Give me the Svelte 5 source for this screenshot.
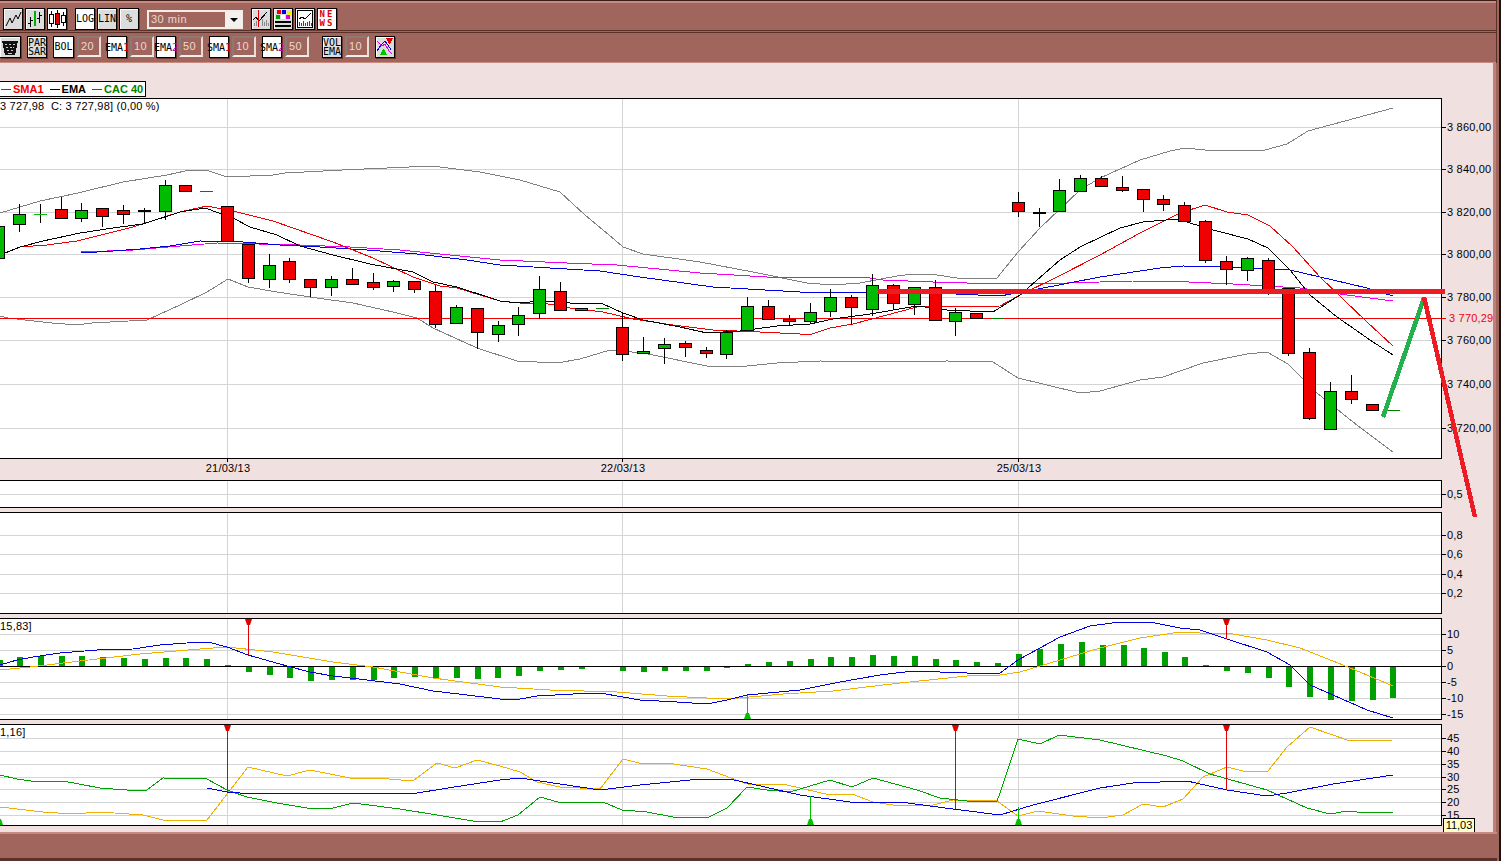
<script>
  // candles: x, wick top, body top, body bottom, wick bottom, colour (r g = body, d l k = flat dash)
  const candles = [
    [-2,226,226,258,258,'g'],[19,204,214,224,231,'g'],[40,204,214,214,222,'l'],[61,197,209,218,218,'r'],
    [81,203,210,218,221,'g'],[102,208,208,216,226,'r'],[123,205,210,214,223,'r'],[144,208,210,210,223,'k'],
    [165,180,185,211,219,'g'],[185,185,185,191,191,'r'],[206,191,191,191,191,'d'],[227,206,206,241,241,'r'],
    [248,244,244,278,282,'r'],[269,254,265,279,287,'g'],[289,258,261,279,282,'r'],[310,279,279,287,296,'r'],
    [331,276,279,287,295,'g'],[352,268,279,284,284,'r'],[373,273,282,287,289,'r'],[393,280,281,286,291,'g'],
    [414,281,281,289,292,'r'],[435,285,291,324,327,'r'],[456,305,307,323,323,'g'],[477,308,308,332,348,'r'],
    [498,321,325,334,341,'g'],[518,307,315,324,335,'g'],[539,276,289,313,318,'g'],[560,282,291,310,310,'r'],
    [581,308,308,310,310,'g'],[602,308,308,308,308,'d'],[622,313,327,354,360,'r'],[643,337,351,353,353,'g'],
    [664,338,344,348,363,'g'],[685,341,343,347,356,'r'],[706,347,350,353,357,'r'],[726,330,332,354,358,'g'],
    [747,297,306,330,330,'g'],[768,300,306,319,319,'r'],[789,315,319,321,325,'r'],[810,303,312,321,323,'g'],
    [830,289,297,311,316,'g'],[851,295,297,307,324,'r'],[872,274,285,309,315,'g'],[893,284,285,303,309,'r'],
    [914,287,287,304,314,'g'],[935,280,287,320,320,'r'],[955,308,312,321,335,'g'],[976,313,313,318,318,'r'],
    [997,318,318,318,318,'d'],[1018,192,202,211,216,'r'],[1039,208,212,212,226,'k'],[1059,179,190,211,211,'g'],
    [1080,175,178,191,191,'g'],[1101,176,178,186,186,'r'],[1122,176,187,190,191,'r'],[1143,189,189,199,211,'r'],
    [1163,195,199,204,210,'r'],[1184,202,205,221,221,'r'],[1205,220,221,260,262,'r'],[1226,256,261,269,284,'r'],
    [1247,257,258,270,280,'g'],[1268,258,260,291,294,'r'],[1288,288,288,353,355,'r'],[1309,348,352,418,419,'r'],
    [1330,382,391,429,429,'g'],[1351,375,391,399,403,'r'],[1372,404,404,410,410,'r'],[1393,410,410,410,410,'d']
  ];

  const dashColors = { d: '#008000', l: '#00c000', k: '#000' };

  const bollUp = [[0,213],[40,201],[78,193],[123,182],[167,175],[185,171],[206,170],[227,177],[273,175],[285,173],[342,170],[432,166],[480,172],[520,180],[560,192],[585,215],[615,240],[623,247],[643,254],[700,262],[753,272],[807,283],[833,285],[860,283],[897,276],[913,274],[937,275],[957,278],[997,278],[1018,252],[1040,228],[1080,190],[1100,178],[1140,160],[1170,151],[1185,148],[1205,150],[1265,150],[1287,144],[1308,131],[1393,108]];
  const bollDown = [[0,316],[8,318],[25,320],[52,323],[77,325],[92,323],[147,320],[180,305],[207,292],[228,279],[248,287],[277,292],[317,298],[353,303],[393,312],[417,318],[433,328],[477,348],[517,361],[557,363],[580,359],[610,350],[643,353],[707,366],[737,367],[777,363],[820,361],[867,362],[947,361],[993,362],[1018,378],[1080,393],[1100,391],[1140,380],[1163,377],[1203,363],[1247,354],[1267,352],[1288,364],[1317,393],[1353,422],[1393,452]];
  const sma = [[5,253],[20,247],[47,245],[77,241],[133,227],[180,212],[207,206],[233,211],[273,221],[333,242],[373,258],[413,277],[440,286],[457,288],[500,301],[520,303],[543,303],[570,308],[603,312],[633,319],[673,325],[713,330],[760,332],[800,334],[812,334],[830,328],[853,324],[917,307],[1000,306],[1020,295],[1057,277],[1100,255],[1140,233],[1180,213],[1205,205],[1227,212],[1248,215],[1270,226],[1293,247],[1320,277],[1367,322],[1393,346]];
  const ema = [[5,253],[20,247],[43,241],[80,233],[113,228],[143,224],[180,212],[205,208],[233,218],[250,227],[277,235],[300,246],[333,255],[370,264],[413,272],[433,282],[457,287],[500,301],[518,303],[543,301],[570,303],[603,304],[623,313],[643,320],[680,327],[707,333],[740,331],[777,326],[810,324],[833,319],[870,314],[917,306],[947,310],[993,312],[1020,295],[1060,260],[1080,247],[1120,228],[1143,222],[1177,219],[1213,230],[1248,239],[1268,248],[1290,270],[1310,295],[1337,317],[1370,340],[1393,355]];
  const ema2 = [[81,253],[113,251],[140,249],[170,246],[200,241],[243,242],[280,245],[320,247],[367,250],[417,254],[467,260],[500,265],[550,268],[600,271],[640,277],[713,287],[800,292],[867,292],[933,293],[1000,296],[1033,290],[1100,277],[1160,268],[1183,266],[1233,267],[1290,270],[1333,280],[1367,288],[1393,296]];
  const ema50 = [[81,252],[133,250],[180,246],[217,243],[300,245],[350,247],[400,250],[500,260],[567,263],[617,265],[700,273],[767,277],[863,277],[883,280],[933,282],[1000,284],[1067,283],[1133,281],[1167,281],[1233,284],[1300,288],[1347,295],[1393,301]];

  const bars = [[20,657],[41,656],[62,656],[82,656],[103,657],[124,658],[145,659],[166,658],[186,658],[207,659],[228,665],[249,672],[270,675],[290,678],[311,681],[332,680],[353,680],[374,680],[394,678],[415,677],[436,679],[457,678],[478,679],[498,678],[519,676],[540,671],[561,670],[582,669],[623,671],[644,672],[665,671],[686,671],[707,671],[727,668],[748,664],[769,662],[790,661],[811,659],[831,657],[852,657],[873,655],[894,656],[915,656],[936,659],[956,660],[977,662],[998,663],[1019,654],[1040,649],[1061,644],[1082,642],[1103,645],[1124,645],[1144,648],[1165,652],[1185,657],[1206,665],[1227,671],[1248,673],[1269,678],[1289,687],[1310,697],[1331,700],[1352,701],[1373,700],[1393,698],[0,660]];
  const macd = [[0,665],[17,660],[33,657],[60,653],[97,650],[133,649],[160,645],[200,642],[208,642],[227,647],[248,655],[287,666],[310,672],[333,676],[367,680],[400,684],[433,691],[467,695],[500,699],[520,699],[537,696],[573,694],[600,693],[640,700],[677,702],[707,704],[727,700],[747,695],[800,690],[840,682],[880,675],[913,671],[967,673],[1000,673],[1018,660],[1040,648],[1060,637],[1090,626],[1120,622],[1150,622],[1180,628],[1200,630],[1227,639],[1267,652],[1290,665],[1310,685],[1333,695],[1367,710],[1393,718]];
  const signal = [[0,670],[30,667],[80,661],[140,654],[200,649],[227,647],[273,652],[333,662],[373,667],[433,678],[500,687],[550,690],[617,692],[667,696],[727,699],[783,694],[833,691],[900,683],[967,676],[1000,675],[1020,672],[1060,660],[1100,648],[1140,638],[1180,632],[1200,633],[1233,634],[1267,640],[1300,648],[1343,665],[1393,686]];

  const adxGreen = [[0,775],[17,779],[38,782],[63,781],[100,788],[140,791],[147,790],[163,778],[207,779],[227,790],[247,797],[277,803],[307,808],[333,808],[353,803],[400,809],[437,815],[473,821],[500,822],[518,815],[540,797],[558,802],[603,802],[622,810],[647,812],[673,817],[707,818],[727,808],[747,787],[767,790],[790,792],[830,780],[852,787],[873,778],[917,790],[940,798],[967,801],[997,801],[1000,793],[1018,739],[1040,744],[1059,735],[1100,740],[1167,756],[1183,761],[1210,774],[1267,790],[1307,808],[1330,814],[1347,811],[1367,813],[1393,812]];
  const adxOrange = [[0,807],[43,812],[73,814],[100,812],[143,815],[163,820],[207,820],[248,767],[287,776],[310,770],[350,778],[377,778],[413,781],[437,763],[455,768],[477,760],[500,766],[520,772],[537,782],[560,787],[600,789],[623,759],[643,764],[667,763],[707,769],[747,784],[787,785],[830,795],[852,794],[873,802],[893,805],[933,805],[953,800],[997,801],[1018,816],[1038,811],[1073,816],[1100,818],[1123,815],[1143,804],[1163,807],[1183,799],[1203,777],[1227,767],[1247,772],[1268,771],[1287,747],[1310,727],[1350,741],[1393,740]];
  const adxBlue = [[207,788],[227,792],[240,793],[300,793],[343,793],[417,793],[467,785],[500,780],[520,778],[560,784],[600,790],[640,785],[700,779],[730,779],[800,795],[850,802],[900,802],[953,809],[1000,815],[1033,805],[1100,788],[1133,783],[1187,781],[1227,790],[1267,796],[1287,793],[1333,784],[1393,775]];

  const pts = (a) => a.map((p) => p.join(',')).join(' ');
  const verticals = [227, 622, 1018];
  const mainAxis = [[127,'3 860,00'],[169,'3 840,00'],[212,'3 820,00'],[254,'3 800,00'],[297,'3 780,00'],[340,'3 760,00'],[384,'3 740,00'],[428,'3 720,00']];
  const volAxis = [[535,'0,8'],[554,'0,6'],[574,'0,4'],[593,'0,2']];
  const macdAxis = [[634,'10'],[650,'5'],[682,'-5'],[698,'-10'],[714,'-15']];
  const adxAxis = [[738,'45'],[751,'40'],[764,'35'],[777,'30'],[789,'25'],[802,'20'],[815,'15']];
</script>

{#snippet grid(rows, top, bottom)}
  {#each rows as r}
    <line class="grid" x1="0" x2="1441" y1={r[0] + 0.5} y2={r[0] + 0.5} />
    <line class="tick" x1="1442" x2="1446" y1={r[0] + 0.5} y2={r[0] + 0.5} />
    <text class="axis" x="1447" y={r[0] + 4}>{r[1]}</text>
  {/each}
  {#each verticals as v}
    <line class="grid" x1={v + 0.5} x2={v + 0.5} y1={top} y2={bottom} />
  {/each}
{/snippet}

{#snippet frame(top, bottom)}
  <rect class="frame" x="-2" y={top + 0.5} width="1443.5" height={bottom - top} />
{/snippet}

{#snippet sigDown(x, top, to)}
  <line x1={x + 0.5} x2={x + 0.5} y1={top} y2={to} stroke="#e00000" shape-rendering="crispEdges" />
  <polygon points="{x - 3},{top} {x + 4},{top} {x + 3},{top + 3} {x + 2},{top + 6} {x - 1},{top + 6} {x - 2},{top + 3}" fill="#e00000" />
{/snippet}

{#snippet sigUp(x, bottom, to)}
  <line x1={x + 0.5} x2={x + 0.5} y1={bottom} y2={to} stroke="#00c000" shape-rendering="crispEdges" />
  <polygon points="{x - 3},{bottom} {x + 4},{bottom} {x + 3},{bottom - 3} {x + 2},{bottom - 6} {x - 1},{bottom - 6} {x - 2},{bottom - 3}" fill="#00c000" />
{/snippet}

<div class="app">
  <div class="bar first">
    <button class="tool">
      <svg viewBox="0 0 18 20"><polyline points="2,17 6,9 8,14 12,6 14,10 17,3" fill="none" stroke="#000" /></svg>
    </button>
    <button class="tool g2">
      <svg viewBox="0 0 18 20" shape-rendering="crispEdges">
        <path d="M4.5 8V18M2 14H4.5M4.5 11H7M13.5 3V14M11 9H13.5M13.5 6H16" fill="none" stroke="#000" />
        <rect x="8" y="2" width="2" height="15" fill="#00b000" />
      </svg>
    </button>
    <button class="tool on g2">
      <svg viewBox="0 0 18 20" shape-rendering="crispEdges">
        <path d="M3.5 2V18M9.5 1V19M15.5 3V17" stroke="#000" fill="none" />
        <rect x="1.5" y="5.5" width="4" height="9" fill="#fff" stroke="#000" />
        <rect x="7.5" y="4.5" width="4" height="11" fill="#e00000" stroke="#000" />
        <rect x="13.5" y="6.5" width="4" height="7" fill="#fff" stroke="#000" />
      </svg>
    </button>
    <button class="tool on g8">LOG</button>
    <button class="tool g2">LIN</button>
    <button class="tool g2">%</button>
    <div class="select g8">
      <span class="value">30 min</span>
      <span class="arrow"><i></i></span>
    </div>
    <button class="tool g8">
      <svg viewBox="0 0 18 20" shape-rendering="crispEdges">
        <path d="M1 11L4 8L7 12L15 3" fill="none" stroke="#000" />
        <path d="M2 17V14M4 17V12M10 17V10M12 17V13M14 17V11M16 17V14" stroke="#888" fill="none" />
        <rect x="6" y="1" width="1" height="17" fill="#e00000" />
      </svg>
    </button>
    <button class="tool g2">
      <svg viewBox="0 0 18 20" shape-rendering="crispEdges">
        <rect x="3" y="1" width="4" height="4" fill="#f00000" /><rect x="8" y="1" width="4" height="4" fill="#0000e0" /><rect x="13" y="2" width="4" height="4" fill="#f0f000" />
        <rect x="2" y="6" width="4" height="4" fill="#00a000" /><rect x="7" y="6" width="4" height="4" fill="#fff" /><rect x="12" y="6" width="4" height="4" fill="#e000e0" />
        <rect x="1" y="12" width="16" height="2" fill="#000" /><rect x="1" y="16" width="16" height="2" fill="#000" />
      </svg>
    </button>
    <button class="tool g2">
      <svg viewBox="0 0 18 20" shape-rendering="crispEdges">
        <path d="M1.5 1.5H16.5V18.5H1.5Z" fill="#fff" stroke="#000" />
        <path d="M3 10L6 8L9 10L15 4" fill="none" stroke="#000" />
        <path d="M3 17V13M5 17V14M7 17V12M9 17V14M11 17V13M13 17V12M15 17V14" fill="none" stroke="#e00000" />
      </svg>
    </button>
    <button class="tool g2 news">NE<br />WS</button>
  </div>

  <div class="bar second">
    <button class="tool trash">
      <svg viewBox="0 0 18 20" shape-rendering="crispEdges">
        <path d="M1 4H17L14 18H4Z" fill="#111" />
        <path d="M4 7H6M8 7H10M12 7H14M5 10H7M9 10H11M12 10H13M6 13H8M10 13H12M7 16H11" stroke="#ccc" fill="none" />
      </svg>
    </button>
    <button class="tool two g6">PAR<br />SAR</button>
    <button class="tool on g6 wide">BOL</button>
    <div class="num">20</div>
    <button class="tool on two g6">EMA<br /><b class="red">1</b></button>
    <div class="num">10</div>
    <button class="tool on two g2">EMA<br /><b class="pur">2</b></button>
    <div class="num">50</div>
    <button class="tool on two g6">SMA<br /><b class="red">1</b></button>
    <div class="num">10</div>
    <button class="tool on two g6">SMA<br /><b class="pur">2</b></button>
    <div class="num">50</div>
    <button class="tool two g12">VOL<br />EMA</button>
    <div class="num">10</div>
    <button class="tool g6">
      <svg viewBox="0 0 18 20" shape-rendering="crispEdges">
        <path d="M1 4L6 9L9 7L13 14L16 17" fill="none" stroke="#e000e0" />
        <path d="M1 14L5 8L9 4L12 8L15 13" fill="none" stroke="#0000e0" />
        <polygon points="10,1 17,1 14,7 13,7" fill="#e00000" />
        <polygon points="7,12 8,12 11,18 4,18" fill="#00c000" />
      </svg>
    </button>
  </div>

  <div class="chart">
    <div class="legend">
      <span class="dash r"></span><span class="r-t">SMA1</span>
      <span class="dash k"></span><span>EMA</span>
      <span class="dash g"></span><span class="g-t">CAC 40</span>
    </div>

    <svg class="pane" width="1493" height="381" viewBox="0 98 1493 381">
      <rect x="0" y="98" width="1441" height="361" fill="#fff" />
      {@render grid(mainAxis, 99, 458)}
      <text class="axis" x="0" y="110">3 727,98  C: 3 727,98] (0,00 %)</text>
      <polyline class="ln" points={pts(bollUp)} stroke="#808080" />
      <polyline class="ln" points={pts(bollDown)} stroke="#808080" />
      <line x1="0" x2="1446" y1="318.5" y2="318.5" stroke="#f00000" shape-rendering="crispEdges" />
      <text class="axis red-t" x="1449" y="322">3 770,29</text>
      <polyline class="ln" points={pts(ema50)} stroke="#f000f0" />
      <polyline class="ln" points={pts(ema2)} stroke="#0000e0" />
      <polyline class="ln" points={pts(sma)} stroke="#f00000" />
      <polyline class="ln" points={pts(ema)} stroke="#000" />
      {#each candles as [x, wt, top, bot, wb, c]}
        {#if c === 'r' || c === 'g'}
          <line class="wick" x1={x + 0.5} x2={x + 0.5} y1={wt} y2={wb + 1} />
          <rect class="body" x={x - 5.5} y={top + 0.5} width="12" height={bot - top} fill={c === 'r' ? '#f00000' : '#00bb00'} />
        {:else}
          {#if wt !== wb}
            <line class="wick" x1={x + 0.5} x2={x + 0.5} y1={wt} y2={wb + 1} />
          {/if}
          <line x1={x - 6} x2={x + 7} y1={top + 0.5} y2={top + 0.5} stroke={dashColors[c]} stroke-width={c === 'k' ? 2 : 1} shape-rendering="crispEdges" />
        {/if}
      {/each}
      {@render frame(98, 458)}
      {#each verticals as v, i}
        <line class="tick" x1={v + 0.5} x2={v + 0.5} y1="459" y2="462" />
        <text class="axis" x={v + 1} y="472" text-anchor="middle">{['21/03/13', '22/03/13', '25/03/13'][i]}</text>
      {/each}
    </svg>

    <svg class="pane" width="1493" height="31" viewBox="0 479 1493 31">
      <rect x="0" y="480" width="1441" height="28" fill="#fff" />
      {@render grid([[494, '0,5']], 481, 507)}
      {@render frame(480, 507)}
    </svg>

    <svg class="pane" width="1493" height="106" viewBox="0 510 1493 106">
      <rect x="0" y="512" width="1441" height="101" fill="#fff" />
      {@render grid(volAxis, 513, 613)}
      {@render frame(512, 613)}
    </svg>

    <svg class="pane" width="1493" height="106" viewBox="0 616 1493 106">
      <rect x="0" y="618" width="1441" height="101" fill="#fff" />
      {@render grid(macdAxis, 619, 719)}
      {#each bars as [x, y]}
        <rect x={x - 3} y={Math.min(y, 666)} width="6" height={Math.abs(y - 666)} fill="#00a000" />
      {/each}
      <line x1="0" x2="1441" y1="666.5" y2="666.5" stroke="#000" shape-rendering="crispEdges" />
      <line class="tick" x1="1442" x2="1446" y1="666.5" y2="666.5" />
      <text class="axis" x="1447" y="670">0</text>
      <text class="axis" x="0" y="630">15,83]</text>
      <polyline class="ln" points={pts(signal)} stroke="#f0b000" />
      <polyline class="ln" points={pts(macd)} stroke="#0000e0" />
      {@render sigDown(248, 619, 655)}
      {@render sigUp(747, 719, 695)}
      {@render sigDown(1226, 619, 639)}
      {@render frame(618, 719)}
    </svg>

    <svg class="pane" width="1493" height="110" viewBox="0 722 1493 110">
      <rect x="0" y="724" width="1441" height="102" fill="#fff" />
      {@render grid(adxAxis, 725, 825)}
      <text class="axis" x="0" y="736">1,16]</text>
      <polyline class="ln" points={pts(adxOrange)} stroke="#f0b000" />
      <polyline class="ln" points={pts(adxGreen)} stroke="#00a000" />
      <polyline class="ln" points={pts(adxBlue)} stroke="#0000e0" />
      {@render sigDown(227, 725, 792)}
      {@render sigDown(955, 725, 809)}
      {@render sigDown(1226, 725, 790)}
      {@render sigUp(810, 825, 796)}
      {@render sigUp(1018, 825, 807)}
      {@render sigUp(-1, 825, 822)}
      {@render frame(724, 825)}
    </svg>
  </div>

  <div class="foot"></div>

  <div class="tip">11,03</div>

  <!-- lines drawn by hand over the chart, they run across the axis -->
  <svg class="over" width="1499" height="861" viewBox="0 0 1499 861">
    <line x1="878" x2="1445" y1="291.5" y2="291.5" stroke="#ed1c24" stroke-width="5" />
    <line x1="1383" y1="417" x2="1424" y2="298" stroke="#22b14c" stroke-width="4.5" />
    <line x1="1424" y1="297" x2="1475" y2="517" stroke="#ed1c24" stroke-width="4.5" />
  </svg>
</div>

<style>
  :global(body) {
    margin: 0;
    background: #1c1210;
  }

  .app {
    position: relative;
    width: 1499px;
    height: 861px;
    overflow: hidden;
    display: flex;
    flex-direction: column;
    background: #a0665e;
    font-family: "Liberation Sans", Arial, sans-serif;
  }

  .bar {
    box-sizing: border-box;
    width: 1497px;
    display: flex;
    align-items: flex-start;
    flex: none;
    background: #a0665e;
    border-right: 1px solid #5a3028;
  }

  .first {
    height: 33px;
    padding: 7px 0 0 3px;
    border-top: 1px solid #3a1c18;
    box-shadow: inset 0 2px 0 #c98a80;
    border-bottom: 3px double #5a3028;
  }

  .second {
    height: 30px;
    padding: 3px 0 0 0;
    border-bottom: 1px solid #5a3028;
  }

  .tool {
    box-sizing: border-box;
    width: 20px;
    height: 22px;
    padding: 0;
    flex: none;
    background: #dcdcdc;
    border: 1px solid #000;
    box-shadow: inset 1px 1px 0 #fff, 1px 1px 0 #6a3a32;
    font: 10px/10px "DejaVu Sans Mono", monospace;
    color: #000;
    text-align: center;
    display: flex;
    align-items: center;
    justify-content: center;
  }

  .tool svg {
    width: 18px;
    height: 20px;
    display: block;
  }

  .tool.on {
    background: #fff;
  }

  .two {
    line-height: 9px;
    font-size: 10px;
  }

  .two b {
    font-weight: normal;
  }

  .red {
    color: #d00000;
  }

  .pur {
    color: #c000c0;
  }

  .news {
    background: #fff;
    color: #e00000;
    font: bold 9px/9px "DejaVu Sans Mono", monospace;
    letter-spacing: 2px;
  }

  .trash {
    margin-left: 0;
    width: 21px;
    border-left: none;
  }

  .wide {
    width: 21px;
  }

  .g2 {
    margin-left: 2px;
  }

  .g6 {
    margin-left: 6px;
  }

  .g8 {
    margin-left: 8px;
  }

  .g12 {
    margin-left: 13px;
  }

  .select {
    box-sizing: border-box;
    width: 96px;
    height: 19px;
    margin-top: 2px;
    display: flex;
    border: 2px solid #f4ece8;
    border-right: 1px solid #f4ece8;
    background: #a0665e;
  }

  .value {
    flex: 1;
    padding-left: 2px;
    color: #eed8d2;
    font-size: 11px;
    line-height: 15px;
    letter-spacing: 0.5px;
  }

  .arrow {
    width: 17px;
    background: #f4f0ee;
    display: flex;
    align-items: center;
    justify-content: center;
  }

  .arrow i {
    border: 4px solid transparent;
    border-top: 4px solid #000;
    border-bottom: none;
  }

  .num {
    box-sizing: border-box;
    width: 24px;
    height: 21px;
    margin-left: 3px;
    padding-left: 2px;
    border: 2px solid;
    border-color: #8a7a76 #e8dcd8 #f4ece8 #8a7a76;
    color: #eed8d2;
    font-size: 11px;
    line-height: 17px;
    letter-spacing: 0.5px;
  }

  .chart {
    box-sizing: content-box;
    width: 1493px;
    height: 769px;
    flex: none;
    background: #f0e0e0;
    border-right: 3px solid #c08078;
    border-top: 1px solid #c98a80;
    margin-top: -1px;
    padding-top: 0;
    display: flex;
    flex-direction: column;
  }

  .legend {
    box-sizing: border-box;
    width: 147px;
    height: 16px;
    margin-top: 18px;
    margin-left: -1px;
    margin-bottom: 1px;
    display: flex;
    align-items: center;
    background: #fff;
    border: 1px solid #000;
    font-weight: bold;
    font-size: 11px;
    color: #000;
    white-space: nowrap;
  }

  .dash {
    width: 10px;
    height: 1px;
    margin: 0 2px 0 6px;
    background: #000;
  }

  .dash.r {
    margin-left: 1px;
    background: #f00000;
  }

  .dash.g {
    background: #008000;
  }

  .r-t {
    color: #f00000;
  }

  .g-t {
    color: #008000;
  }

  .pane {
    display: block;
    flex: none;
  }

  .grid {
    stroke: #d4d4d4;
    shape-rendering: crispEdges;
  }

  .tick {
    stroke: #000;
    shape-rendering: crispEdges;
  }

  .axis {
    font-family: "Liberation Sans", Arial, sans-serif;
    font-size: 11px;
    letter-spacing: 0.2px;
    fill: #000;
    white-space: pre;
  }

  .red-t {
    fill: #f00000;
  }

  .ln {
    fill: none;
    shape-rendering: crispEdges;
  }

  .wick {
    stroke: #000;
    shape-rendering: crispEdges;
  }

  .body {
    stroke: #000;
    shape-rendering: crispEdges;
  }

  .frame {
    fill: none;
    stroke: #000;
    shape-rendering: crispEdges;
  }

  .foot {
    flex: 1;
    background: #a0665e;
    border-top: 2px solid #c98a80;
    border-bottom: 3px solid #5a3028;
    width: 1497px;
    box-sizing: border-box;
  }

  .tip {
    position: absolute;
    left: 1443px;
    top: 818px;
    width: 32px;
    height: 14px;
    box-sizing: border-box;
    border: 1px solid #000;
    border-bottom: none;
    background: #ffffc8;
    font-size: 11px;
    line-height: 13px;
    text-align: center;
  }

  .over {
    position: absolute;
    left: 0;
    top: 0;
    pointer-events: none;
    shape-rendering: crispEdges;
  }
</style>
